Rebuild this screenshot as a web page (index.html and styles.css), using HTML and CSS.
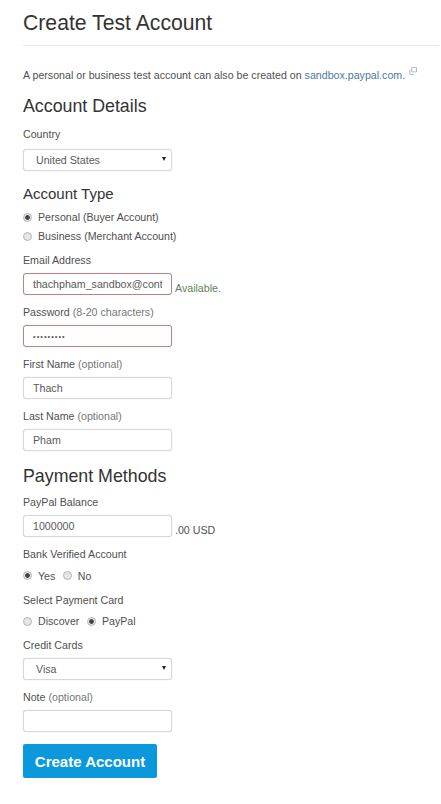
FILE: index.html
```html
<!DOCTYPE html>
<html lang="en">
<head>
    <meta charset="UTF-8">
    <meta name="viewport" content="width=device-width, initial-scale=1.0">
    <title>Create Test Account</title>
    <link rel="stylesheet" href="styles.css">
</head>
<body>
    <div class="page">
        <h1 class="title">Create Test Account</h1>
        <p class="intro">A personal or business test account can also be created on <a href="#">sandbox.paypal.com.</a>
            <svg class="ext" width="8" height="8" viewBox="0 0 9 9"><path d="M3 .5h5.5v5H3z M1 3v5.5h5" fill="none" stroke="#9db4c6" stroke-width="1"/></svg>
        </p>

        <h2 class="section">Account Details</h2>
        <div class="field">
            <label class="label country">Country</label>
            <div class="select"><select><option>United States</option></select></div>
        </div>

        <h3 class="section type">Account Type</h3>
        <div class="stack">
            <label class="radio"><input type="radio" name="type" checked> Personal (Buyer Account)</label>
            <label class="radio"><input type="radio" name="type"> Business (Merchant Account)</label>
        </div>

        <div class="field">
            <label class="label">Email Address</label>
            <div class="line">
                <input class="input error" type="text" value="thachpham_sandbox@contact.com">
                <span class="note ok">Available.</span>
            </div>
        </div>
        <div class="field">
            <label class="label">Password <span class="muted">(8-20 characters)</span></label>
            <input class="input error pass" type="password" value="123456789">
        </div>
        <div class="field">
            <label class="label">First Name <span class="muted">(optional)</span></label>
            <input class="input" type="text" value="Thach">
        </div>
        <div class="field">
            <label class="label">Last Name <span class="muted">(optional)</span></label>
            <input class="input" type="text" value="Pham">
        </div>

        <h2 class="section pay">Payment Methods</h2>
        <div class="field">
            <label class="label">PayPal Balance</label>
            <div class="line">
                <input class="input" type="text" value="1000000">
                <span class="note">.00 USD</span>
            </div>
        </div>
        <div class="field">
            <label class="label">Bank Verified Account</label>
            <div class="inline">
                <label class="radio"><input type="radio" name="bank" checked> Yes</label>
                <label class="radio"><input type="radio" name="bank"> No</label>
            </div>
        </div>
        <div class="field">
            <label class="label">Select Payment Card</label>
            <div class="inline">
                <label class="radio"><input type="radio" name="card"> Discover</label>
                <label class="radio"><input type="radio" name="card" checked> PayPal</label>
            </div>
        </div>
        <div class="field">
            <label class="label">Credit Cards</label>
            <div class="select"><select><option>Visa</option></select></div>
        </div>
        <div class="field">
            <label class="label">Note <span class="muted">(optional)</span></label>
            <input class="input" type="text">
        </div>
        <button class="submit">Create Account</button>
    </div>
</body>
</html>
```

FILE: styles.css
```css
* {
    box-sizing: border-box;
}
body {
    margin: 0;
    background-color: #fff;
    color: #4f4f4f;
    font-family: "Liberation Sans", Arial, sans-serif;
    font-size: 10.65px;
}
.page {
    padding: 11px 2px 0 23px;
}
.title {
    margin: 0;
    padding-bottom: 10px;
    border-bottom: 1px solid #e8e8e8;
    color: #333;
    font-size: 21.2px;
    line-height: 24px;
    font-weight: normal;
}
.intro {
    margin: 21px 0 12px;
    line-height: 16px;
    white-space: nowrap;
}
.intro a {
    color: #4a7a9c;
    text-decoration: none;
}
.ext {
    margin-left: 1px;
    vertical-align: 4px;
}
.section {
    margin: 11px 0 0;
    color: #333;
    font-size: 17.8px;
    line-height: 22px;
    font-weight: normal;
}
.type {
    margin-top: 13px;
    font-size: 15px;
    line-height: 20px;
}
.pay {
    margin-top: 16px;
    line-height: 18px;
}
.field {
    margin-top: 10px;
}
.label {
    display: block;
    line-height: 14px;
    margin-bottom: 6px;
}
.country {
    margin-bottom: 8px;
}
.muted {
    color: #777;
}
.input,
.select select {
    display: block;
    width: 149px;
    height: 22px;
    padding: 0 9px;
    border: 1px solid #d8d8d8;
    border-radius: 3px;
    box-shadow: 0 0 1px #ccc;
    background: #fff;
    color: #5a5a5a;
    font-family: inherit;
    font-size: 10.65px;
    outline: none;
}
.error {
    border-color: #b98486;
}
.pass {
    font-size: 7.5px;
    letter-spacing: 1px;
}
.line {
    display: flex;
    align-items: flex-end;
    gap: 3px;
}
.note {
    line-height: 13px;
}
.ok {
    color: #5f7f5a;
}
.select {
    position: relative;
    width: 149px;
}
.select select {
    appearance: none;
    padding-left: 12px;
}
.select::after {
    content: "";
    position: absolute;
    top: 8px;
    right: 6px;
    border-left: 2.5px solid transparent;
    border-right: 2.5px solid transparent;
    border-top: 4px solid #222;
}
.stack {
    display: flex;
    flex-direction: column;
    gap: 5px;
    margin-top: 6px;
}
.inline {
    display: flex;
    gap: 7.5px;
    margin-top: 7.5px;
}
.radio {
    display: flex;
    align-items: center;
    gap: 6px;
    line-height: 14px;
    height: 14px;
}
.radio input {
    appearance: none;
    width: 9px;
    height: 9px;
    margin: 0;
    border: 1px solid #b5b5b5;
    border-radius: 50%;
    background: #e6e6e6;
}
.radio input:checked {
    background: radial-gradient(circle, #444 0 2px, #e6e6e6 2.6px);
}
.submit {
    display: block;
    width: 134px;
    height: 34px;
    margin-top: 12px;
    border: 0;
    border-radius: 2px;
    background-color: #0b98dc;
    color: #fff;
    font-family: inherit;
    font-size: 15px;
    font-weight: bold;
}
```
